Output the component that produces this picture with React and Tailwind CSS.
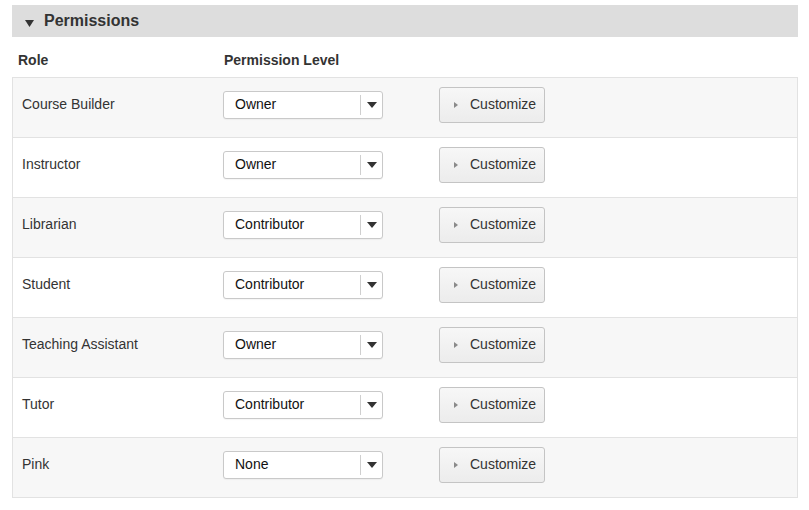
import React from "react";

const rows = [
  { role: "Course Builder", level: "Owner" },
  { role: "Instructor", level: "Owner" },
  { role: "Librarian", level: "Contributor" },
  { role: "Student", level: "Contributor" },
  { role: "Teaching Assistant", level: "Owner" },
  { role: "Tutor", level: "Contributor" },
  { role: "Pink", level: "None" },
];

function Select({ value }) {
  return (
    <div className="flex items-center w-[160px] h-[28px] bg-white border border-[#c9c9c9] rounded-[3px] shadow-[0_1px_1px_rgba(0,0,0,0.04)]">
      <span className="flex-1 pl-[11px] text-[14px] text-[#111]">{value}</span>
      <span className="w-px h-[20px] bg-[#cfcfcf]" />
      <span className="w-[21px] flex justify-center">
        <svg width="10" height="6" viewBox="0 0 10 6">
          <path d="M0 0 L10 0 L5 6 Z" fill="#333" />
        </svg>
      </span>
    </div>
  );
}

function CustomizeButton() {
  return (
    <button className="flex items-center w-[106px] h-[36px] rounded-[3px] border border-[#c4c4c4] bg-gradient-to-b from-[#f7f7f7] to-[#ececec] text-[14px] text-[#333]">
      <svg className="ml-[14px] mr-[12px]" width="4" height="6" viewBox="0 0 4 6">
        <path d="M0 0 L4 3 L0 6 Z" fill="#8a8a8a" />
      </svg>
      Customize
    </button>
  );
}

export default function App() {
  return (
    <div className="w-[809px] h-[510px] bg-white pt-[5px] px-[12px] font-['Liberation_Sans',Arial,sans-serif]">
      <div className="w-[786px]">
        {/* section header */}
        <div className="flex items-center h-[32px] bg-[#dddddd] pl-[13px]">
          <svg width="9" height="7" viewBox="0 0 9 7" className="mt-[4px]">
            <path d="M0 0 L9 0 L4.5 7 Z" fill="#333" />
          </svg>
          <span className="ml-[10px] text-[16px] font-bold text-[#333]">Permissions</span>
        </div>

        {/* column headers */}
        <div className="flex items-end h-[40px] pb-[6px] text-[14px] font-bold text-[#333]">
          <span className="w-[212px] pl-[6px]">Role</span>
          <span>Permission Level</span>
        </div>

        {/* rows */}
        <div className="border border-[#e2e2e2]">
          {rows.map((r, i) => (
            <div
              key={r.role}
              className={`flex items-center pb-[6px] ${i > 0 ? "h-[60px] border-t border-[#e2e2e2]" : "h-[59px]"} ${i % 2 === 0 ? "bg-[#f7f7f7]" : "bg-white"}`}
            >
              <span className="w-[210px] pl-[9px] text-[14px] text-[#333]">{r.role}</span>
              <Select value={r.level} />
              <div className="ml-[56px]">
                <CustomizeButton />
              </div>
            </div>
          ))}
        </div>
      </div>
    </div>
  );
}
